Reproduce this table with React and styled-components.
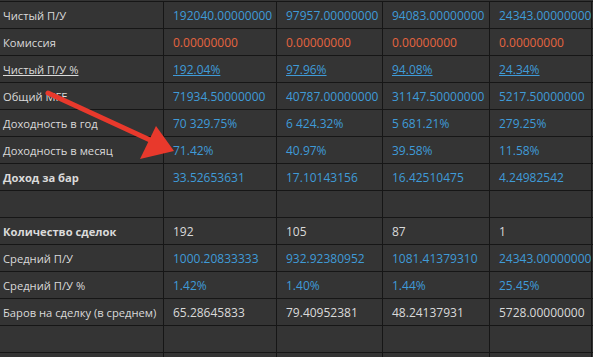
import React from 'react';
import styled, { createGlobalStyle } from 'styled-components';

const rows = [
  { label: 'Чистый П/У', tone: 'blue', values: ['192040.00000000', '97957.00000000', '94083.00000000', '24343.00000000'] },
  { label: 'Комиссия', tone: 'red', values: ['0.00000000', '0.00000000', '0.00000000', '0.00000000'] },
  { label: 'Чистый П/У %', tone: 'blue', link: true, values: ['192.04%', '97.96%', '94.08%', '24.34%'] },
  { label: 'Общий MFE', tone: 'blue', values: ['71934.50000000', '40787.00000000', '31147.50000000', '5217.50000000'] },
  { label: 'Доходность в год', tone: 'blue', values: ['70 329.75%', '6 424.32%', '5 681.21%', '279.25%'] },
  { label: 'Доходность в месяц', tone: 'blue', values: ['71.42%', '40.97%', '39.58%', '11.58%'] },
  { label: 'Доход за бар', tone: 'blue', bold: true, values: ['33.52653631', '17.10143156', '16.42510475', '4.24982542'] },
  { label: '', values: ['', '', '', ''] },
  { label: 'Количество сделок', tone: 'plain', bold: true, values: ['192', '105', '87', '1'] },
  { label: 'Средний П/У', tone: 'blue', values: ['1000.20833333', '932.92380952', '1081.41379310', '24343.00000000'] },
  { label: 'Средний П/У %', tone: 'blue', values: ['1.42%', '1.40%', '1.44%', '25.45%'] },
  { label: 'Баров на сделку (в среднем)', tone: 'plain', values: ['65.28645833', '79.40952381', '48.24137931', '5728.00000000'] },
  { label: '', values: ['', '', '', ''] },
  { label: '', values: ['', '', '', ''] },
];

const toneColor = {
  blue: '#3f9bd8',
  red: '#e5643f',
  plain: '#dadada',
};

const App = () => (
  <Page>
    <GlobalStyle />
    <Grid>
      {rows.map((row, i) => (
        <React.Fragment key={i}>
          <LabelCell bold={row.bold} link={row.link}>
            {row.label}
          </LabelCell>
          {row.values.map((v, j) => (
            <ValueCell key={j} tone={row.tone} link={row.link}>
              {v}
            </ValueCell>
          ))}
          <ValueCell />
        </React.Fragment>
      ))}
    </Grid>
    <Arrow viewBox="0 0 593 357" width="593" height="357">
      <line x1="48" y1="93" x2="150" y2="140" stroke="#e8392c" strokeWidth="5" strokeLinecap="round" />
      <polygon points="174,151 156,126 140,159" fill="#e8392c" />
    </Arrow>
  </Page>
);

const GlobalStyle = createGlobalStyle`
  html, body {
    margin: 0;
    padding: 0;
    background: #333333;
    overflow: hidden;
  }
  body {
    font-family: "Open Sans", "Noto Sans", sans-serif;
  }
`;

const Page = styled.div`
  position: relative;
  width: 593px;
  height: 357px;
  overflow: hidden;
  background: #343434;
  padding-top: 1px;
  box-sizing: border-box;
`;

const Grid = styled.div`
  display: grid;
  grid-template-columns: 163px 112px 105px 106px 101px 40px;
  grid-auto-rows: 26px;
  gap: 1px;
  background: #161616;
  border-top: 1px solid #161616;
`;

const Cell = styled.div`
  background: #343434;
  display: flex;
  align-items: center;
  white-space: nowrap;
  overflow: hidden;
`;

const LabelCell = styled(Cell)`
  padding-left: 3px;
  font-size: 11.2px;
  color: #dadada;
  font-weight: ${p => (p.bold ? 700 : 400)};
  text-decoration: ${p => (p.link ? 'underline' : 'none')};
`;

const ValueCell = styled(Cell)`
  padding-left: 9px;
  font-size: 12px;
  color: ${p => toneColor[p.tone] || '#dadada'};
  text-decoration: ${p => (p.link ? 'underline' : 'none')};
`;

const Arrow = styled.svg`
  position: absolute;
  left: 0;
  top: 0;
  pointer-events: none;
`;

export default App;
